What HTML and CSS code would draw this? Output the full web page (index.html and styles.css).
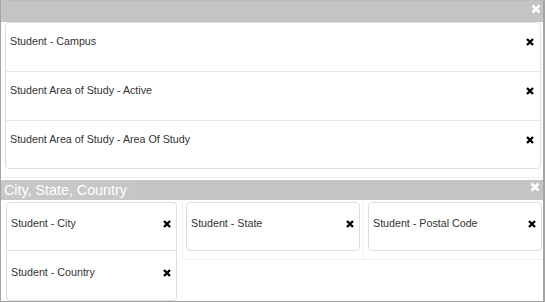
FILE: index.html
```html
<!DOCTYPE html>
<html>
<head>
<meta charset="utf-8">
<link rel="stylesheet" href="styles.css">
</head>
<body>
<div class="frame">
  <div class="bar">
    <svg class="close-w" viewBox="0 0 10 10"><path d="M1.5 1.5 L8.5 8.5 M8.5 1.5 L1.5 8.5"/></svg>
  </div>
  <div class="panel">
    <div class="row"><span class="label">Student - Campus</span><svg class="x" viewBox="0 0 8 8"><path d="M1 1 L7 7 M7 1 L1 7"/></svg></div>
    <div class="row"><span class="label">Student Area of Study - Active</span><svg class="x" viewBox="0 0 8 8"><path d="M1 1 L7 7 M7 1 L1 7"/></svg></div>
    <div class="row"><span class="label">Student Area of Study - Area Of Study</span><svg class="x" viewBox="0 0 8 8"><path d="M1 1 L7 7 M7 1 L1 7"/></svg></div>
  </div>
  <div class="sep"></div>
  <div class="bar bar2">
    <span class="title">City, State, Country</span>
    <svg class="close-w" viewBox="0 0 10 10"><path d="M1.5 1.5 L8.5 8.5 M8.5 1.5 L1.5 8.5"/></svg>
  </div>
  <div class="grid">
    <div class="col1">
      <div class="card first"><span class="label">Student - City</span><svg class="x" viewBox="0 0 8 8"><path d="M1 1 L7 7 M7 1 L1 7"/></svg></div>
      <div class="card last"><span class="label">Student - Country</span><svg class="x" viewBox="0 0 8 8"><path d="M1 1 L7 7 M7 1 L1 7"/></svg></div>
    </div>
    <div class="rest">
      <div class="cell c2">
        <div class="card solo"><span class="label">Student - State</span><svg class="x" viewBox="0 0 8 8"><path d="M1 1 L7 7 M7 1 L1 7"/></svg></div>
      </div>
      <div class="cell c3">
        <div class="card solo"><span class="label">Student - Postal Code</span><svg class="x" viewBox="0 0 8 8"><path d="M1 1 L7 7 M7 1 L1 7"/></svg></div>
      </div>
    </div>
  </div>
</div>
</body>
</html>
```

FILE: styles.css
```css
html, body {
  margin: 0;
  padding: 0;
  background: #ffffff;
}

body {
  font-family: "Liberation Sans", Arial, sans-serif;
}

.frame {
  width: 545px;
  height: 302px;
  box-sizing: border-box;
  border: 1px solid #a4a4a4;
  border-top-color: #bdbdbd;
  border-right-width: 2px;
  background: #ffffff;
  display: flex;
  flex-direction: column;
}

.bar {
  height: 21px;
  background: #c4c4c4;
  display: flex;
  align-items: flex-start;
  justify-content: flex-end;
  flex-shrink: 0;
}

.close-w {
  width: 10px;
  height: 10px;
  margin: 3px 2px 0 0;
  fill: none;
  stroke: #ffffff;
  stroke-width: 2.6;
}

.panel {
  margin: 0 2px 0 4px;
  border: 1px solid #dedede;
  border-radius: 4px;
  flex-shrink: 0;
}

.row {
  height: 49px;
  box-sizing: border-box;
  padding: 11px 6px 0 4px;
  display: flex;
  justify-content: space-between;
  align-items: flex-start;
  border-bottom: 1px solid #e6e6e6;
}

.row:last-child {
  height: 47px;
  border-bottom: none;
}

.label {
  font-size: 10.7px;
  line-height: 15px;
  color: #333333;
  white-space: nowrap;
}

.x {
  width: 8px;
  height: 8px;
  margin-top: 4px;
  fill: none;
  stroke: #000000;
  stroke-width: 2.4;
}

.sep {
  height: 8px;
  border-bottom: 1px solid #eeeeee;
  margin-bottom: 2px;
  flex-shrink: 0;
}

.bar2 {
  height: 20px;
  justify-content: space-between;
}

.bar2 .close-w {
  margin: 2px 3px 0 0;
}

.title {
  font-size: 14.3px;
  line-height: 20px;
  padding: 0 10px 0 3px;
  color: #ffffff;
  background: #c7c7c7;
  white-space: nowrap;
}

.grid {
  flex: 1;
  display: flex;
}

.col1 {
  width: 181px;
  box-sizing: border-box;
  padding: 2px 5px 0 5px;
  display: flex;
  flex-direction: column;
}

.card {
  border: 1px solid #dddddd;
  display: flex;
  justify-content: space-between;
  align-items: flex-start;
  padding: 13px 5px 0 4px;
  box-sizing: border-box;
}

.card.first {
  height: 49px;
  border-radius: 4px 4px 0 0;
}

.card.last {
  height: 50px;
  border-top: none;
  border-radius: 0 0 4px 4px;
  padding-top: 14px;
}

.card.solo {
  height: 49px;
  border-radius: 4px;
}

.rest {
  flex: 1;
  display: flex;
  align-items: flex-start;
  height: 60px;
  box-sizing: border-box;
  border-left: 1px solid #f2f2f2;
  border-bottom: 1px solid #f0f0f0;
}

.cell {
  height: 100%;
  box-sizing: border-box;
  padding-top: 2px;
}

.c2 {
  width: 181px;
  padding-left: 3px;
  padding-right: 3px;
  border-right: 1px solid #f2f2f2;
}

.c3 {
  flex: 1;
  padding-left: 4px;
  padding-right: 1px;
}
```
